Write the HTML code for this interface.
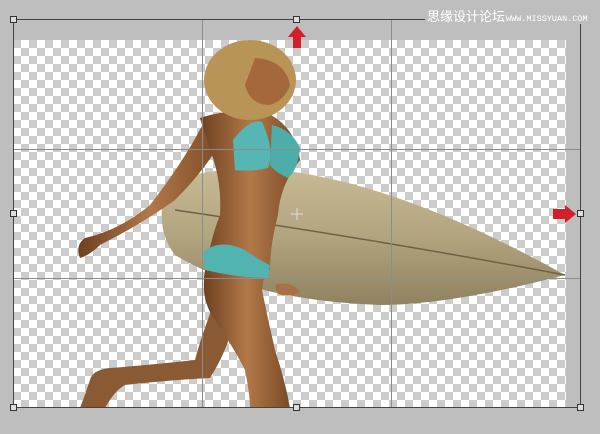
<!DOCTYPE html>
<html><head><meta charset="utf-8"><style>
body{margin:0;width:600px;height:429px;overflow:hidden;background:#bebebe;font-family:"Liberation Sans","Noto Sans CJK SC",sans-serif}
</style></head><body>
<svg width="600" height="429" viewBox="0 0 600 429" xmlns="http://www.w3.org/2000/svg">
<defs>
<pattern id="ck" x="13" y="40" width="16" height="16" patternUnits="userSpaceOnUse">
<rect width="16" height="16" fill="#fff"/><rect width="8" height="8" fill="#cccccc"/><rect x="8" y="8" width="8" height="8" fill="#cccccc"/>
</pattern>
<linearGradient id="bd" x1="0" y1="0" x2="0" y2="1"><stop offset="0" stop-color="#c7bb96"/><stop offset="0.5" stop-color="#b2a47e"/><stop offset="1" stop-color="#8f8260"/></linearGradient>
<linearGradient id="sk" x1="0" y1="0" x2="1" y2="0"><stop offset="0" stop-color="#6e4020"/><stop offset="0.5" stop-color="#b27848"/><stop offset="1" stop-color="#7a4a26"/></linearGradient>
</defs>
<rect x="13" y="40" width="553" height="368" fill="url(#ck)"/>
<!-- surfboard -->
<path d="M165,190 Q175,172 250,168 Q380,172 565,275 Q450,305 380,305 Q250,300 175,255 Q155,230 165,190Z" fill="url(#bd)"/>
<path d="M175,210 Q380,240 565,275" stroke="#6d6246" stroke-width="1.5" fill="none"/>
<!-- back arm -->
<path d="M205,120 Q185,160 150,205 Q120,230 85,238 Q75,245 80,258 Q90,255 100,245 Q140,225 175,200 Q205,170 222,140Z" fill="url(#sk)"/>
<!-- back leg -->
<path d="M215,300 Q200,340 195,360 Q150,365 110,368 Q92,370 90,380 Q85,395 80,408 L105,408 Q115,390 125,385 Q170,380 210,378 Q228,350 238,310Z" fill="#8a5a34"/>
<!-- front leg -->
<path d="M205,270 Q200,300 215,320 Q235,350 245,370 Q250,395 250,408 L290,408 Q285,380 275,350 Q268,320 262,290 L265,270Z" fill="url(#sk)"/>
<!-- torso -->
<path d="M200,118 Q230,108 265,112 Q295,125 300,160 Q280,185 278,215 Q270,245 270,270 L205,275 Q210,240 220,215 Q222,180 210,150Z" fill="url(#sk)"/>
<!-- hand -->
<path d="M275,285 Q290,280 300,292 Q290,298 278,294Z" fill="#a87046"/>
<!-- bikini -->
<path d="M233,140 Q250,118 262,122 Q275,150 268,168 Q250,172 235,170Z" fill="#55b6b4"/>
<path d="M272,125 Q292,130 300,148 Q298,170 288,178 Q275,172 270,165Z" fill="#4cadab"/>
<path d="M203,252 Q220,238 245,250 Q262,262 270,265 L268,278 Q240,278 205,270Z" fill="#52b4b0"/>
<!-- head / hair -->
<ellipse cx="250" cy="80" rx="46" ry="40" fill="#b89456"/>
<path d="M255,58 Q285,60 290,85 Q285,100 270,105 Q250,105 245,85Z" fill="#a4683c"/>
<!-- grid & box -->
<g stroke="#8c8c8c" stroke-width="1">
<line x1="202.5" y1="19" x2="202.5" y2="408"/><line x1="391.5" y1="19" x2="391.5" y2="408"/>
<line x1="13" y1="149.5" x2="581" y2="149.5"/><line x1="13" y1="278.5" x2="581" y2="278.5"/>
</g>
<rect x="13.5" y="19.5" width="567" height="388" fill="none" stroke="#444" stroke-width="1"/>
<g fill="#ddd" stroke="#333" stroke-width="1">
<rect x="10.5" y="16.5" width="6" height="6"/><rect x="293.5" y="16.5" width="6" height="6"/><rect x="577.5" y="16.5" width="6" height="6"/>
<rect x="10.5" y="210.5" width="6" height="6"/><rect x="577.5" y="210.5" width="6" height="6"/>
<rect x="10.5" y="404.5" width="6" height="6"/><rect x="293.5" y="404.5" width="6" height="6"/><rect x="577.5" y="404.5" width="6" height="6"/>
</g>
<path d="M297,26 L306,37 L301,37 L301,48 L293,48 L293,37 L288,37Z" fill="#d0202a"/>
<path d="M576,214 L565,205 L565,209 L553,209 L553,219 L565,219 L565,223Z" fill="#d0202a"/>
<line x1="297" y1="208" x2="297" y2="220" stroke="#ddd"/><line x1="291" y1="214" x2="303" y2="214" stroke="#ddd"/>
<rect x="425" y="8" width="170" height="16" fill="#bebebe"/>
<text x="427" y="21" font-size="13" fill="#fff" font-family="Noto Sans CJK SC,sans-serif">思缘设计论坛</text>
<text x="506" y="21" font-size="8.5" fill="#fff" font-family="Liberation Mono,monospace">WWW.MISSYUAN.COM</text>
</svg>
</body></html>
